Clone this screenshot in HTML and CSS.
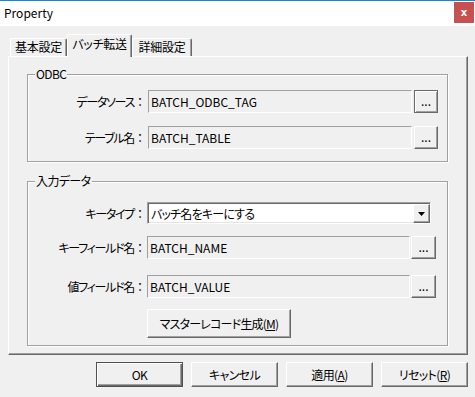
FILE: index.html
```html
<!DOCTYPE html>
<html>
<head>
  <meta charset="utf-8">
  <title>Property</title>
  <link rel="stylesheet" href="styles.css">
</head>
<body>
  <div id="dialog">
    <div class="titlebar">
      <span class="title">Property</span>
      <div class="close">x</div>
    </div>

    <div class="tabs">
      <div class="tab first">基本設定</div>
      <div class="tab active">バッチ転送</div>
      <div class="tab last">詳細設定</div>
    </div>

    <div class="panel">
      <div class="group odbc">
        <div class="group-title">ODBC</div>
        <div class="row first-row">
          <div class="label">データソース<span class="colon">：</span></div>
          <div class="field">BATCH_ODBC_TAG</div>
          <div class="btn dots focus">...</div>
        </div>
        <div class="row">
          <div class="label">テーブル名<span class="colon">：</span></div>
          <div class="field">BATCH_TABLE</div>
          <div class="btn dots">...</div>
        </div>
      </div>

      <div class="group input">
        <div class="group-title">入力データ</div>
        <div class="row combo-row">
          <div class="label">キータイプ<span class="colon">：</span></div>
          <div class="combo">
            <span class="combo-text">バッチ名をキーにする</span>
            <div class="combo-btn">
              <svg width="7" height="4" viewBox="0 0 7 4"><polygon points="0,0 7,0 3.5,4" fill="#000"/></svg>
            </div>
          </div>
        </div>
        <div class="row gap-small">
          <div class="label">キーフィールド名<span class="colon">：</span></div>
          <div class="field">BATCH_NAME</div>
          <div class="btn dots">...</div>
        </div>
        <div class="row gap-large">
          <div class="label">値フィールド名<span class="colon">：</span></div>
          <div class="field">BATCH_VALUE</div>
          <div class="btn dots">...</div>
        </div>
        <div class="row gap-small">
          <div class="btn master">マスターレコード生成(<u>M</u>)</div>
        </div>
      </div>
    </div>

    <div class="footer">
      <div class="btn action default">OK</div>
      <div class="btn action">キャンセル</div>
      <div class="btn action">適用(<u>A</u>)</div>
      <div class="btn action">リセット(<u>R</u>)</div>
    </div>
  </div>
</body>
</html>
```

FILE: styles.css
```css
* {
    box-sizing: border-box;
}

body {
    margin: 0;
    font-family: "Noto Sans CJK JP", "Noto Sans", sans-serif;
    font-size: 12px;
    color: #000;
    background-color: #f0f0f0;
}

#dialog {
    width: 475px;
    height: 397px;
    background-color: #f0f0f0;
}

.titlebar {
    height: 26px;
    border-top: 1px solid #1883d7;
    background-color: #fff;
    display: flex;
    align-items: center;
    justify-content: space-between;
    padding-left: 4px;
    padding-right: 1px;
}

.title {
    font-size: 12px;
    margin-top: -2px;
}

.close {
    width: 20px;
    height: 21px;
    margin-top: -2px;
    background-color: #c75050;
    color: #fff;
    font-family: "DejaVu Sans", sans-serif;
    font-weight: bold;
    font-size: 10px;
    display: flex;
    align-items: center;
    justify-content: center;
}

/* tabs */
.tabs {
    display: flex;
    align-items: flex-end;
    height: 22px;
    margin-top: 8px;
    padding-left: 10px;
}

.tab {
    height: 18px;
    line-height: 16px;
    text-align: center;
    font-feature-settings: "palt";
    letter-spacing: -0.3px;
    border-top: 1px solid #fff;
    border-left: 1px solid #fff;
    border-right: 1px solid #696969;
    box-shadow: inset -1px 0 #a0a0a0;
    border-radius: 2px 2px 0 0;
}

.tab.first {
    width: 57px;
}

.tab.active {
    position: relative;
    z-index: 1;
    width: 65px;
    height: 23px;
    margin-bottom: -1px;
    line-height: 18px;
    background-color: #f0f0f0;
}

.tab.last {
    width: 60px;
}

/* tab page */
.panel {
    width: 460px;
    margin-left: 8px;
    border-top: 1px solid #fff;
    border-left: 1px solid #fff;
    border-right: 1px solid #696969;
    border-bottom: 1px solid #696969;
    box-shadow: inset -1px -1px #a0a0a0;
    padding: 0 19px 8px 18px;
}

.group {
    border: 1px solid #a0a0a0;
    box-shadow: 1px 1px 0 #fff, inset 1px 1px 0 #fff;
    padding-bottom: 12px;
}

.group.odbc {
    margin-top: 17px;
}

.group.input {
    margin-top: 19px;
    padding-bottom: 7px;
}

.group-title {
    width: fit-content;
    margin: -9px 0 0 7px;
    padding: 0 1px;
    line-height: 16px;
    background-color: #f0f0f0;
    font-feature-settings: "palt";
    letter-spacing: -0.6px;
}

.row {
    display: grid;
    grid-template-columns: 118px 264px 24px;
    column-gap: 2px;
    align-items: center;
    height: 23px;
    margin-top: 13px;
}

.row.first-row {
    margin-top: 8px;
}

.input .row {
    grid-template-columns: 118px 263px 25px;
    column-gap: 1px;
}

.row.combo-row {
    margin-top: 13px;
    height: 22px;
}

.row.gap-small {
    margin-top: 12px;
}

.row.gap-large {
    margin-top: 16px;
    height: 22px;
}

.label {
    text-align: right;
    font-feature-settings: "palt";
    letter-spacing: -1.3px;
    white-space: nowrap;
}

.colon {
    font-feature-settings: normal;
    letter-spacing: 0;
}

.field {
    height: 100%;
    line-height: 21px;
    padding-left: 2px;
    background-color: #f0f0f0;
    border-top: 1px solid #a0a0a0;
    border-left: 1px solid #a0a0a0;
    border-right: 1px solid #fff;
    border-bottom: 1px solid #fff;
    white-space: nowrap;
}

/* combo box */
.combo {
    grid-column: 2 / span 2;
    width: 284px;
    height: 22px;
    display: flex;
    align-items: stretch;
    background-color: #fff;
    border-top: 1px solid #a0a0a0;
    border-left: 1px solid #a0a0a0;
    border-right: 1px solid #fff;
    border-bottom: 1px solid #fff;
    box-shadow: inset 1px 1px #696969, inset -1px -1px #e3e3e3;
    padding: 1px 0 0 1px;
}

.combo-text {
    flex: 1;
    line-height: 19px;
    padding-left: 2px;
    font-feature-settings: "palt";
    letter-spacing: -0.8px;
}

.combo-btn {
    width: 17px;
    background-color: #f0f0f0;
    border-top: 1px solid #fff;
    border-left: 1px solid #fff;
    border-right: 1px solid #696969;
    border-bottom: 1px solid #696969;
    box-shadow: inset -1px -1px #a0a0a0;
    display: flex;
    align-items: center;
    justify-content: center;
}

/* buttons */
.btn {
    background-color: #f0f0f0;
    border-top: 1px solid #fff;
    border-left: 1px solid #fff;
    border-right: 1px solid #696969;
    border-bottom: 1px solid #696969;
    box-shadow: inset -1px -1px #a0a0a0;
    display: flex;
    align-items: center;
    justify-content: center;
    font-feature-settings: "palt";
    white-space: nowrap;
    cursor: pointer;
}

.btn.dots {
    height: 23px;
    padding-bottom: 2px;
}

.btn.focus {
    border: 1px solid #696969;
    box-shadow: inset 1px 1px #fff, inset -1px -1px #a0a0a0;
}

.btn.master {
    grid-column: 2;
    width: 144px;
    height: 29px;
    letter-spacing: -0.8px;
}

.row:has(.master) {
    height: 29px;
}

.footer {
    display: flex;
    justify-content: flex-end;
    gap: 8px;
    margin-top: 7px;
    padding-right: 7px;
}

.btn.action {
    width: 87px;
    height: 25px;
    letter-spacing: -0.6px;
}

.btn.default {
    border: 1px solid #505050;
    box-shadow: inset 1px 1px #fff, inset -1px -1px #696969, inset -2px -2px #a0a0a0;
}
```
